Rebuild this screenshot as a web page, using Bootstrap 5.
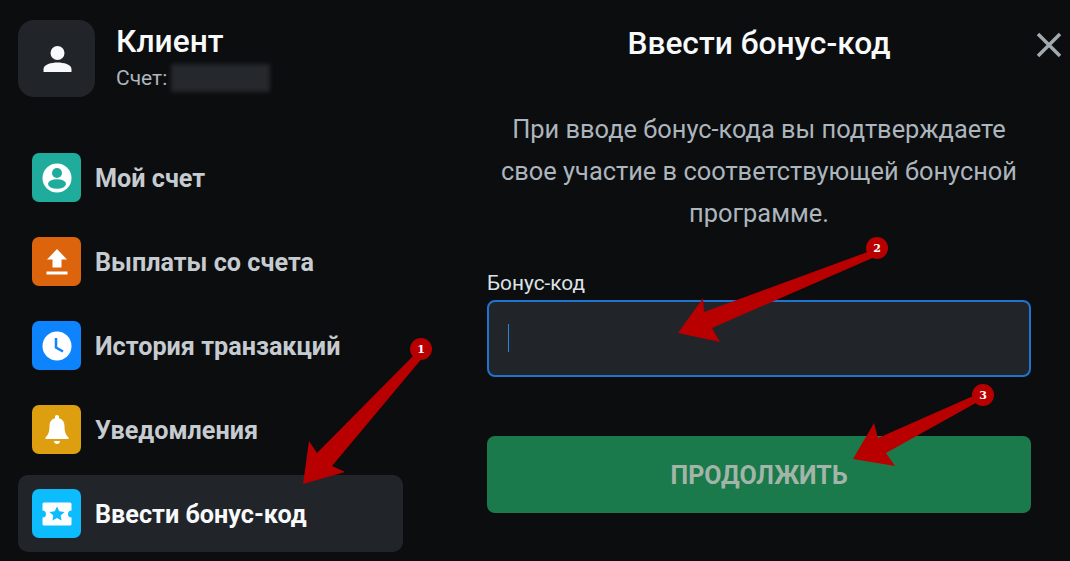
<!DOCTYPE html>
<html lang="ru">
<head>
<meta charset="utf-8">
<title>Ввести бонус-код</title>
<link href="https://cdn.jsdelivr.net/npm/bootstrap@5.3.0/dist/css/bootstrap.min.css" rel="stylesheet">
<style>
html,body{height:561px;overflow:hidden}
body{background:#0b0d0f;font-family:Roboto,"Liberation Sans",sans-serif;color:#f8f9fa}
.stage{width:1070px;height:561px}
.side{width:385px;margin-left:18px;padding-top:20px;flex:none}
.avatar{width:77px;height:77px;border-radius:16px;background:#212529}
.who{margin-left:21px}
.who-name{font-size:31.7px;font-weight:500;line-height:38px;margin-top:3px;color:#f8f9fa}
.who-acc{font-size:21px;line-height:28px;margin-top:3px;color:#adb5bd}
.acc-mask{width:99px;height:28px;background:#25282c;filter:blur(2px);margin-left:4px}
.menu{margin-top:42px;gap:7px}
.menu-row{height:77px;padding:0 14px;border-radius:10px;font-size:25.2px;font-weight:700;color:#c6cbd0;gap:14px;text-decoration:none}
.menu-label{margin-top:2px}
.menu-row.on{background:#212529;color:#f8f9fa}
.tile{width:49px;height:49px;border-radius:7px;flex:none}
.t-teal{background:#20ac9c}.t-orange{background:#dc640c}.t-blue{background:#0d84fd}.t-gold{background:#dd9e0f}.t-sky{background:#0dbcfd}
.main{width:544px;margin-left:84px;flex:none}
.main-title{font-size:31.7px;font-weight:500;line-height:38px;margin:25px 0 0;color:#f8f9fa}
.intro{font-size:25.400px;line-height:42px;color:#adb5bd;margin:45px 0 0}
.code-label{font-size:20.800px;line-height:24px;margin:37px 0 5px;color:#dee2e6;display:block}
.code-field.form-control,.code-field.form-control:focus{height:77px;background:#212529;border:2px solid #1f74d0;border-radius:8px;box-shadow:none;color:#f8f9fa}
.fake-caret{position:absolute;left:21px;top:24px;width:1px;height:28px;background:#2f83d8}
.go.btn,.go.btn:disabled{height:77px;width:100%;margin-top:59px;padding-top:8px;background:#1b7a4b;border:0;border-radius:8px;font-size:25px;font-weight:700;color:#a3b5a9;opacity:1}
.close-x{position:absolute;left:1036px;top:32px}
.marks{position:absolute;left:0;top:0;pointer-events:none}
.marks text{font-family:"DejaVu Serif",serif;font-size:11px;font-weight:700;fill:#fff;text-anchor:middle}
</style>
</head>
<body>
<div class="stage d-flex position-relative">
  <div class="side d-flex flex-column">
    <div class="d-flex align-items-start">
      <div class="avatar d-flex align-items-center justify-content-center">
        <svg width="30" height="30" viewBox="0 0 30 30"><circle cx="15.5" cy="9" r="7" fill="#f8f9fa"/><path d="M1.5 28v-3c0-4.500 8-6.500 14-6.500s14 2 14 6.500v3z" fill="#f8f9fa"/></svg>
      </div>
      <div class="who">
        <div class="who-name">Клиент</div>
        <div class="who-acc d-flex">Счет:<span class="acc-mask"></span></div>
      </div>
    </div>
    <nav class="menu d-flex flex-column">
      <a class="menu-row d-flex align-items-center" href="#">
        <span class="tile t-teal d-flex align-items-center justify-content-center">
          <svg width="30" height="30" viewBox="0 0 30 30"><circle cx="15" cy="15" r="14.500" fill="#fff"/><circle cx="15" cy="10" r="5" fill="#20ac9c"/><ellipse cx="15" cy="21" rx="9" ry="4.800" fill="#20ac9c"/></svg>
        </span><span class="menu-label">Мой счет</span></a>
      <a class="menu-row d-flex align-items-center" href="#">
        <span class="tile t-orange d-flex align-items-center justify-content-center">
          <svg width="22" height="26" viewBox="0 0 22 26"><path d="M11 0 21 10.500H15.500V18.500H6.500V10.500H1z" fill="#fff"/><rect x="0.500" y="22.500" width="21" height="3" fill="#fff"/></svg>
        </span><span class="menu-label">Выплаты со счета</span></a>
      <a class="menu-row d-flex align-items-center" href="#">
        <span class="tile t-blue d-flex align-items-center justify-content-center">
          <svg width="30" height="30" viewBox="0 0 30 30"><circle cx="15" cy="15" r="14.500" fill="#fff"/><path d="M14 7v9.500l7 4" fill="none" stroke="#0d84fd" stroke-width="2.500"/></svg>
        </span><span class="menu-label">История транзакций</span></a>
      <a class="menu-row d-flex align-items-center" href="#">
        <span class="tile t-gold d-flex align-items-center justify-content-center">
          <svg width="24" height="29" viewBox="0 0 24 29"><path d="M12 0c1.300 0 2 .9 2 2v1.200c3.800 1 5.500 4 5.500 7.800 0 5 .8 8.500 4 11.500v1.500H.5v-1.500c3.200-3 4-6.500 4-11.500 0-3.800 1.700-6.800 5.500-7.800V2c0-1.100.7-2 2-2z" fill="#fff"/><path d="M9 26h6c0 1.700-1.300 3-3 3s-3-1.300-3-3z" fill="#fff"/></svg>
        </span><span class="menu-label">Уведомления</span></a>
      <a class="menu-row on d-flex align-items-center" href="#">
        <span class="tile t-sky d-flex align-items-center justify-content-center">
          <svg width="30" height="24" viewBox="0 0 30 24"><path d="M2 .5h26A1.500 1.500 0 0 1 29.500 2v6.500a3.500 3.500 0 0 0 0 7V22a1.500 1.500 0 0 1-1.500 1.500H2A1.500 1.500 0 0 1 .5 22v-6.500a3.500 3.500 0 0 0 0-7V2A1.500 1.500 0 0 1 2 .5z" fill="#fff"/><path d="M15 4.500l2.300 4.800 5.200.6-3.800 3.600.9 5.100-4.600-2.500-4.600 2.500.9-5.100-3.800-3.600 5.200-.6z" fill="#0dbcfd"/></svg>
        </span><span class="menu-label">Ввести бонус-код</span></a>
    </nav>
  </div>
  <div class="main">
    <h1 class="main-title text-center">Ввести бонус-код</h1>
    <p class="intro text-center">При вводе бонус-кода вы подтверждаете<br>свое участие в соответствующей бонусной<br>программе.</p>
    <label class="code-label" for="code">Бонус-код</label>
    <div class="position-relative">
      <input id="code" class="form-control code-field" type="text">
      <span class="fake-caret"></span>
    </div>
    <button class="btn go" type="button" disabled>ПРОДОЛЖИТЬ</button>
  </div>
  <svg class="close-x" width="26" height="26" viewBox="0 0 26 26"><path d="M2 2 24 24M24 2 2 24" stroke="#a3a9b0" stroke-width="3.500" fill="none"/></svg>
  <svg class="marks" width="1070" height="561" viewBox="0 0 1070 561">
    <g fill="#b80000">
      <polygon points="303,484 309,441 317,453 417,352 424,356 332,466 345,472"/>
      <polygon points="678,333 703,298 704,312 873,250 877,256 712,328 720,342"/>
      <polygon points="853,459 874,423 878,438 980,393 983,399 886,453 895,466"/>
    </g>
    <circle cx="421" cy="349" r="11" fill="#b80000"/><text x="421" y="353">1</text>
    <circle cx="877" cy="248" r="11" fill="#b80000"/><text x="877" y="252">2</text>
    <circle cx="983" cy="395" r="11" fill="#b80000"/><text x="983" y="399">3</text>
  </svg>
</div>
<script src="https://cdn.jsdelivr.net/npm/bootstrap@5.3.0/dist/js/bootstrap.bundle.min.js"></script>
</body>
</html>
